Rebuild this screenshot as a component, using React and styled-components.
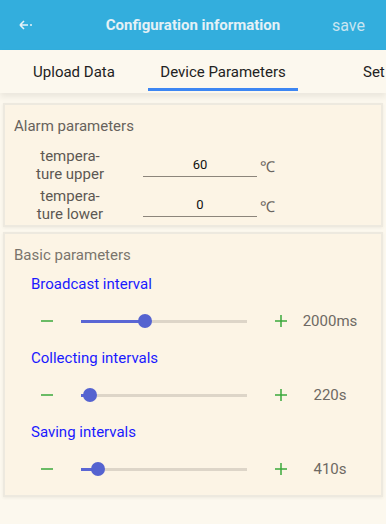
import React from 'react';
import styled, { createGlobalStyle } from 'styled-components';

const GlobalStyle = createGlobalStyle`
  html, body {
    margin: 0;
    padding: 0;
    background: #fcf8ee;
    font-family: Roboto, "Noto Sans", "Liberation Sans", sans-serif;
  }
  * { box-sizing: border-box; }
`;

const Page = styled.div`
  width: 386px;
  height: 524px;
  overflow: hidden;
  background: #fcf8ee;
`;

const Header = styled.div`
  height: 50px;
  background: #33aedd;
  display: grid;
  grid-template-columns: 1fr auto 1fr;
  align-items: center;
`;

const Back = styled.div`
  padding-left: 19px;
  display: flex;
  align-items: center;
  color: #e6f2f7;
`;

const Title = styled.div`
  font-size: 15px;
  font-weight: 700;
  color: #e4f1f6;
`;

const Save = styled.div`
  justify-self: end;
  padding-right: 21px;
  font-size: 16px;
  color: #c8e5f1;
`;

const TabBar = styled.div`
  height: 43px;
  display: flex;
  overflow: hidden;
  white-space: nowrap;
  background: #fcf8ee;
  box-shadow: 0 4px 6px rgba(0, 0, 0, 0.07);
  position: relative;
  z-index: 1;
`;

const Tab = styled.div`
  flex: none;
  width: ${p => p.$w}px;
  padding-left: ${p => p.$pl || 0}px;
  display: flex;
  align-items: center;
  justify-content: ${p => (p.$pl ? 'flex-start' : 'center')};
  font-size: 15px;
  color: #222;
  position: relative;
  &::after {
    content: '';
    display: ${p => (p.$active ? 'block' : 'none')};
    position: absolute;
    left: 0;
    right: 0;
    bottom: 2px;
    height: 3px;
    background: #3d86f2;
  }
`;

const Card = styled.div`
  margin: ${p => p.$mt}px 3px 0;
  height: ${p => p.$h}px;
  overflow: hidden;
  background: #fcf4e5;
  border: 2px solid #ede9df;
  box-shadow: 0 1px 3px rgba(0, 0, 0, 0.06);
  padding: ${p => p.$pt}px 0 0 9px;
`;

const CardTitle = styled.div`
  font-size: 15px;
  line-height: 20px;
  color: ${p => p.$color};
  margin-bottom: ${p => p.$mb || 0}px;
`;

const AlarmRow = styled.div`
  display: grid;
  grid-template-columns: 84px 114px auto;
  align-items: center;
  height: 40px;
  margin-left: 14px;
`;

const AlarmLabel = styled.div`
  font-size: 15px;
  line-height: 18px;
  color: #5c5853;
  text-align: center;
  height: 40px;
  padding-top: 1px;
  overflow: hidden;
`;

const ValueField = styled.div`
  margin-left: 31px;
  width: 114px;
  height: 22px;
  border-bottom: 1.5px solid #8c857b;
  font-size: 13px;
  color: #111;
  text-align: center;
  line-height: 20px;
`;

const Unit = styled.div`
  margin-left: 34px;
  font-size: 15px;
  color: #6a655f;
`;

const ParamLabel = styled.div`
  margin-left: 17px;
  font-size: 15px;
  line-height: 20px;
  color: #1a1aff;
`;

const SliderRow = styled.div`
  height: 54px;
  display: grid;
  grid-template-columns: 34px 200px 34px 64px;
  align-items: center;
  padding-left: 16px;
`;

const StepButton = styled.div`
  display: flex;
  justify-content: center;
  align-items: center;
`;

const TrackCell = styled.div`
  padding: 0 17px;
`;

const Track = styled.div`
  position: relative;
  height: 3px;
  background: #ddd5c8;
`;

const Fill = styled.div`
  position: absolute;
  left: 0;
  top: 0;
  bottom: 0;
  background: #5a66d4;
`;

const Thumb = styled.div`
  position: absolute;
  top: 50%;
  width: 14px;
  height: 14px;
  margin: -7px 0 0 -7px;
  border-radius: 50%;
  background: #5563d0;
`;

const Value = styled.div`
  text-align: center;
  font-size: 15px;
  color: #6e6963;
`;

const Minus = () => (
  <svg width="12" height="12" viewBox="0 0 12 12">
    <line x1="0" y1="6" x2="12" y2="6" stroke="#3aa83a" strokeWidth="1.5" />
  </svg>
);

const Plus = () => (
  <svg width="12" height="12" viewBox="0 0 12 12">
    <line x1="0" y1="6" x2="12" y2="6" stroke="#3aa83a" strokeWidth="1.5" />
    <line x1="6" y1="0" x2="6" y2="12" stroke="#3aa83a" strokeWidth="1.5" />
  </svg>
);

const BackArrow = () => (
  <svg width="14" height="10" viewBox="0 0 14 10">
    <path d="M1 5 H9 M1 5 L5 1 M1 5 L5 9" stroke="#e6f2f7" strokeWidth="1.6" fill="none" />
    <line x1="11" y1="5" x2="13" y2="5" stroke="#e6f2f7" strokeWidth="1.4" />
  </svg>
);

const params = [
  { label: 'Broadcast interval', pos: 38.5, value: '2000ms' },
  { label: 'Collecting intervals', pos: 5.4, value: '220s' },
  { label: 'Saving intervals', pos: 10.2, value: '410s' },
];

function Slider({ pos }) {
  return (
    <TrackCell>
      <Track>
        <Fill style={{ width: `${pos}%` }} />
        <Thumb style={{ left: `${pos}%` }} />
      </Track>
    </TrackCell>
  );
}

export default function App() {
  return (
    <Page>
      <GlobalStyle />
      <Header>
        <Back>
          <BackArrow />
        </Back>
        <Title>Configuration information</Title>
        <Save>save</Save>
      </Header>

      <TabBar>
        <Tab $w={148}>Upload Data</Tab>
        <Tab $w={150} $active>Device Parameters</Tab>
        <Tab $w={200} $pl={65}>Set up other parameters</Tab>
      </TabBar>

      <Card $mt={10} $h={124} $pt={11}>
        <CardTitle $color="#67625c" $mb={10}>Alarm parameters</CardTitle>
        <AlarmRow>
          <AlarmLabel>tempera-<br />ture upper</AlarmLabel>
          <ValueField>60</ValueField>
          <Unit>℃</Unit>
        </AlarmRow>
        <AlarmRow>
          <AlarmLabel>tempera-<br />ture lower</AlarmLabel>
          <ValueField>0</ValueField>
          <Unit>℃</Unit>
        </AlarmRow>
      </Card>

      <Card $mt={5} $h={265} $pt={11}>
        <CardTitle $color="#7a746c" $mb={9}>Basic parameters</CardTitle>
        {params.map(p => (
          <React.Fragment key={p.label}>
            <ParamLabel>{p.label}</ParamLabel>
            <SliderRow>
              <StepButton><Minus /></StepButton>
              <Slider pos={p.pos} />
              <StepButton><Plus /></StepButton>
              <Value>{p.value}</Value>
            </SliderRow>
          </React.Fragment>
        ))}
      </Card>
    </Page>
  );
}
